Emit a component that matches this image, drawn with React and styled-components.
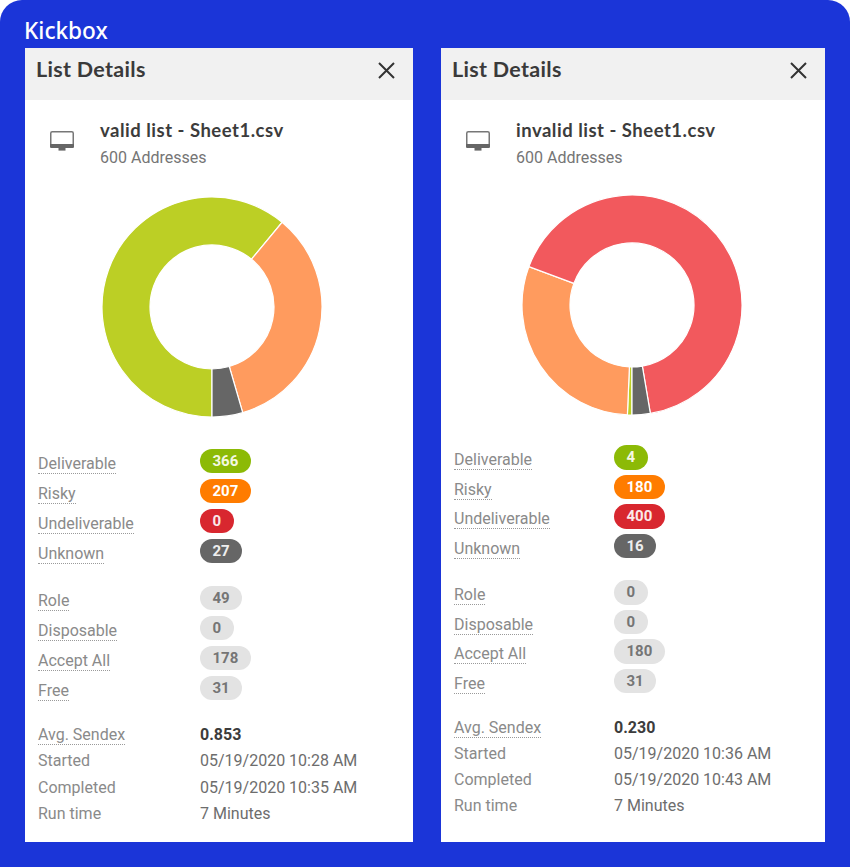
import React from "react";
import styled, { createGlobalStyle } from "styled-components";

const GlobalStyle = createGlobalStyle`
  html, body {
    margin: 0;
    padding: 0;
    background: #fff;
  }
  * { box-sizing: border-box; }
`;

const Frame = styled.div`
  width: 850px;
  height: 867px;
  padding: 0 25px 25px;
  background: #1b35d8;
  border-radius: 22px 22px 0 0;
  font-family: Roboto, "Liberation Sans", sans-serif;
`;

const Brand = styled.div`
  height: 48px;
  padding: 16px 0 0 0;
  margin-left: -1px;
  color: #fff;
  font-family: "Noto Sans", sans-serif;
  font-size: 22.6px;
  font-weight: 500;
  line-height: 30px;
`;

const Panels = styled.div`
  display: grid;
  grid-template-columns: 388px 384px;
  gap: 28px;
  height: 794px;
`;

const Panel = styled.section`
  background: #fff;
`;

const Header = styled.header`
  display: flex;
  align-items: center;
  justify-content: space-between;
  height: 52px;
  padding: 0 17px 8px 11px;
  background: #f1f1f1;
`;

const HeaderTitle = styled.h2`
  margin: 0 0 2px;
  color: #3a3a3a;
  font-family: Lato, sans-serif;
  font-size: 21.5px;
  font-weight: 700;
  letter-spacing: 0.3px;
`;

const FileRow = styled.div`
  display: flex;
  padding: 19px 0 0 25px;
  gap: 26px;
`;

const FileIcon = styled.svg`
  flex: none;
  width: 24px;
  height: 21px;
  margin-top: 12px;
`;

const FileName = styled.div`
  color: #3c3c3c;
  font-family: Lato, sans-serif;
  font-size: 18.5px;
  font-weight: 700;
  letter-spacing: 0.5px;
  line-height: 22px;
`;

const FileCount = styled.div`
  margin-top: 7px;
  color: #757575;
  font-size: 16px;
  line-height: 20px;
`;

const Chart = styled.svg`
  display: block;
  width: 224px;
  height: 224px;
  margin-top: ${(p) => p.$top}px;
  margin-left: ${(p) => p.$left}px;
`;

const Stats = styled.div`
  padding-left: ${(p) => p.$left}px;
  margin-top: ${(p) => p.$top}px;
`;

const Group = styled.div`
  margin-bottom: ${(p) => p.$gap}px;
`;

const Row = styled.div`
  display: grid;
  grid-template-columns: ${(p) => p.$col}px 1fr;
  align-items: start;
  height: ${(p) => p.$height}px;
`;

const Label = styled.span`
  justify-self: start;
  margin-top: ${(p) => p.$top || 0}px;
  color: #8a8a8a;
  font-size: 16px;
  line-height: 18px;
  border-bottom: ${(p) => (p.$plain ? "none" : "1px dotted #9a9a9a")};
`;

const pillColors = {
  green: ["#8cba06", "#f4f8e2"],
  orange: ["#ff7c00", "#fff"],
  red: ["#d8272f", "#fbe9e9"],
  dark: ["#666", "#eee"],
  light: ["#e3e3e3", "#757575"],
};

const Pill = styled.span`
  justify-self: start;
  min-width: 33px;
  height: 24.5px;
  padding: 0 12.5px;
  border-radius: 13px;
  background: ${(p) => pillColors[p.$tone][0]};
  color: ${(p) => pillColors[p.$tone][1]};
  font-size: 15px;
  font-weight: 700;
  line-height: 24px;
  text-align: center;
`;

const Value = styled.span`
  margin-top: 4px;
  color: ${(p) => (p.$strong ? "#3c3c3c" : "#6d6d6d")};
  font-size: 16px;
  font-weight: ${(p) => (p.$strong ? 700 : 400)};
  line-height: 18px;
`;

const CHART_COLORS = {
  green: "#bccf25",
  orange: "#ff9b5e",
  red: "#f2595d",
  dark: "#666",
};

const polar = (r, deg) => {
  const a = (deg * Math.PI) / 180;
  return [112 + r * Math.sin(a), 112 - r * Math.cos(a)];
};

const slicePath = (from, to) => {
  const large = to - from > 180 ? 1 : 0;
  const [x1, y1] = polar(110, from);
  const [x2, y2] = polar(110, to);
  const [x3, y3] = polar(62, to);
  const [x4, y4] = polar(62, from);
  return `M${x1} ${y1}A110 110 0 ${large} 1 ${x2} ${y2}L${x3} ${y3}A62 62 0 ${large} 0 ${x4} ${y4}Z`;
};

function Donut({ slices, top, left }) {
  const total = slices.reduce((sum, s) => sum + s.value, 0);
  let angle = 180;
  return (
    <Chart viewBox="0 0 224 224" $top={top} $left={left}>
      {slices.map((s) => {
        const from = angle;
        angle += (s.value / total) * 360;
        return (
          <path
            key={s.tone}
            d={slicePath(from, angle)}
            fill={CHART_COLORS[s.tone]}
            stroke="#fff"
            strokeWidth="1.2"
          />
        );
      })}
    </Chart>
  );
}

const CloseIcon = () => (
  <svg width="19" height="19" viewBox="0 0 19 19">
    <path d="M2 2l15 15M17 2L2 17" stroke="#333" strokeWidth="2" fill="none" />
  </svg>
);

const Monitor = () => (
  <FileIcon viewBox="0 0 24 21">
    <rect x="0.75" y="0.75" width="22.5" height="15.5" rx="1.5" fill="#fff" stroke="#777" strokeWidth="1.5" />
    <path d="M0 13h24v2.5a1.5 1.5 0 0 1-1.5 1.5h-21A1.5 1.5 0 0 1 0 15.5z" fill="#666" />
    <path d="M8.5 17h7v2.6h-7z" fill="#666" />
  </FileIcon>
);

const lists = [
  {
    name: "valid list - Sheet1.csv",
    layout: { chartTop: 27, chartLeft: 75, statsTop: 29.5, statsLeft: 13, col: 162, rowH: 30, metaH: 26.5, gap: 17, gap2: 16, labelTop: 6 },
    counts: [366, 207, 0, 27],
    flags: [49, 0, 178, 31],
    sendex: "0.853",
    started: "05/19/2020 10:28 AM",
    completed: "05/19/2020 10:35 AM",
    runtime: "7 Minutes",
    slices: [
      { tone: "green", value: 366 },
      { tone: "orange", value: 207 },
      { tone: "dark", value: 27 },
    ],
  },
  {
    name: "invalid list - Sheet1.csv",
    layout: { chartTop: 25, chartLeft: 79, statsTop: 28, statsLeft: 13, col: 160, rowH: 29.5, metaH: 26, gap: 17, gap2: 16.5, labelTop: 6 },
    counts: [4, 180, 400, 16],
    flags: [0, 0, 180, 31],
    sendex: "0.230",
    started: "05/19/2020 10:36 AM",
    completed: "05/19/2020 10:43 AM",
    runtime: "7 Minutes",
    slices: [
      { tone: "green", value: 4 },
      { tone: "orange", value: 180 },
      { tone: "red", value: 400 },
      { tone: "dark", value: 16 },
    ],
  },
];

const RESULT_LABELS = [
  ["Deliverable", "green"],
  ["Risky", "orange"],
  ["Undeliverable", "red"],
  ["Unknown", "dark"],
];
const FLAG_LABELS = ["Role", "Disposable", "Accept All", "Free"];

function ListCard({ list }) {
  const { layout } = list;
  return (
    <Panel>
      <Header>
        <HeaderTitle>List Details</HeaderTitle>
        <CloseIcon />
      </Header>
      <FileRow>
        <Monitor />
        <div>
          <FileName>{list.name}</FileName>
          <FileCount>600 Addresses</FileCount>
        </div>
      </FileRow>
      <Donut slices={list.slices} top={layout.chartTop} left={layout.chartLeft} />
      <Stats $left={layout.statsLeft} $top={layout.statsTop}>
        <Group $gap={layout.gap}>
          {RESULT_LABELS.map(([label, tone], i) => (
            <Row key={label} $col={layout.col} $height={layout.rowH}>
              <Label $top={layout.labelTop}>{label}</Label>
              <Pill $tone={tone}>{list.counts[i]}</Pill>
            </Row>
          ))}
        </Group>
        <Group $gap={layout.gap2}>
          {FLAG_LABELS.map((label, i) => (
            <Row key={label} $col={layout.col} $height={layout.rowH}>
              <Label $top={layout.labelTop}>{label}</Label>
              <Pill $tone="light">{list.flags[i]}</Pill>
            </Row>
          ))}
        </Group>
        <Row $col={layout.col} $height={layout.metaH}>
          <Label $top={4}>Avg. Sendex</Label>
          <Value $strong>{list.sendex}</Value>
        </Row>
        <Row $col={layout.col} $height={layout.metaH}>
          <Label $plain $top={4}>Started</Label>
          <Value>{list.started}</Value>
        </Row>
        <Row $col={layout.col} $height={layout.metaH}>
          <Label $plain $top={4}>Completed</Label>
          <Value>{list.completed}</Value>
        </Row>
        <Row $col={layout.col} $height={layout.metaH}>
          <Label $plain $top={4}>Run time</Label>
          <Value>{list.runtime}</Value>
        </Row>
      </Stats>
    </Panel>
  );
}

export default function App() {
  return (
    <>
      <GlobalStyle />
      <Frame>
        <Brand>Kickbox</Brand>
        <Panels>
          {lists.map((list) => (
            <ListCard key={list.name} list={list} />
          ))}
        </Panels>
      </Frame>
    </>
  );
}
